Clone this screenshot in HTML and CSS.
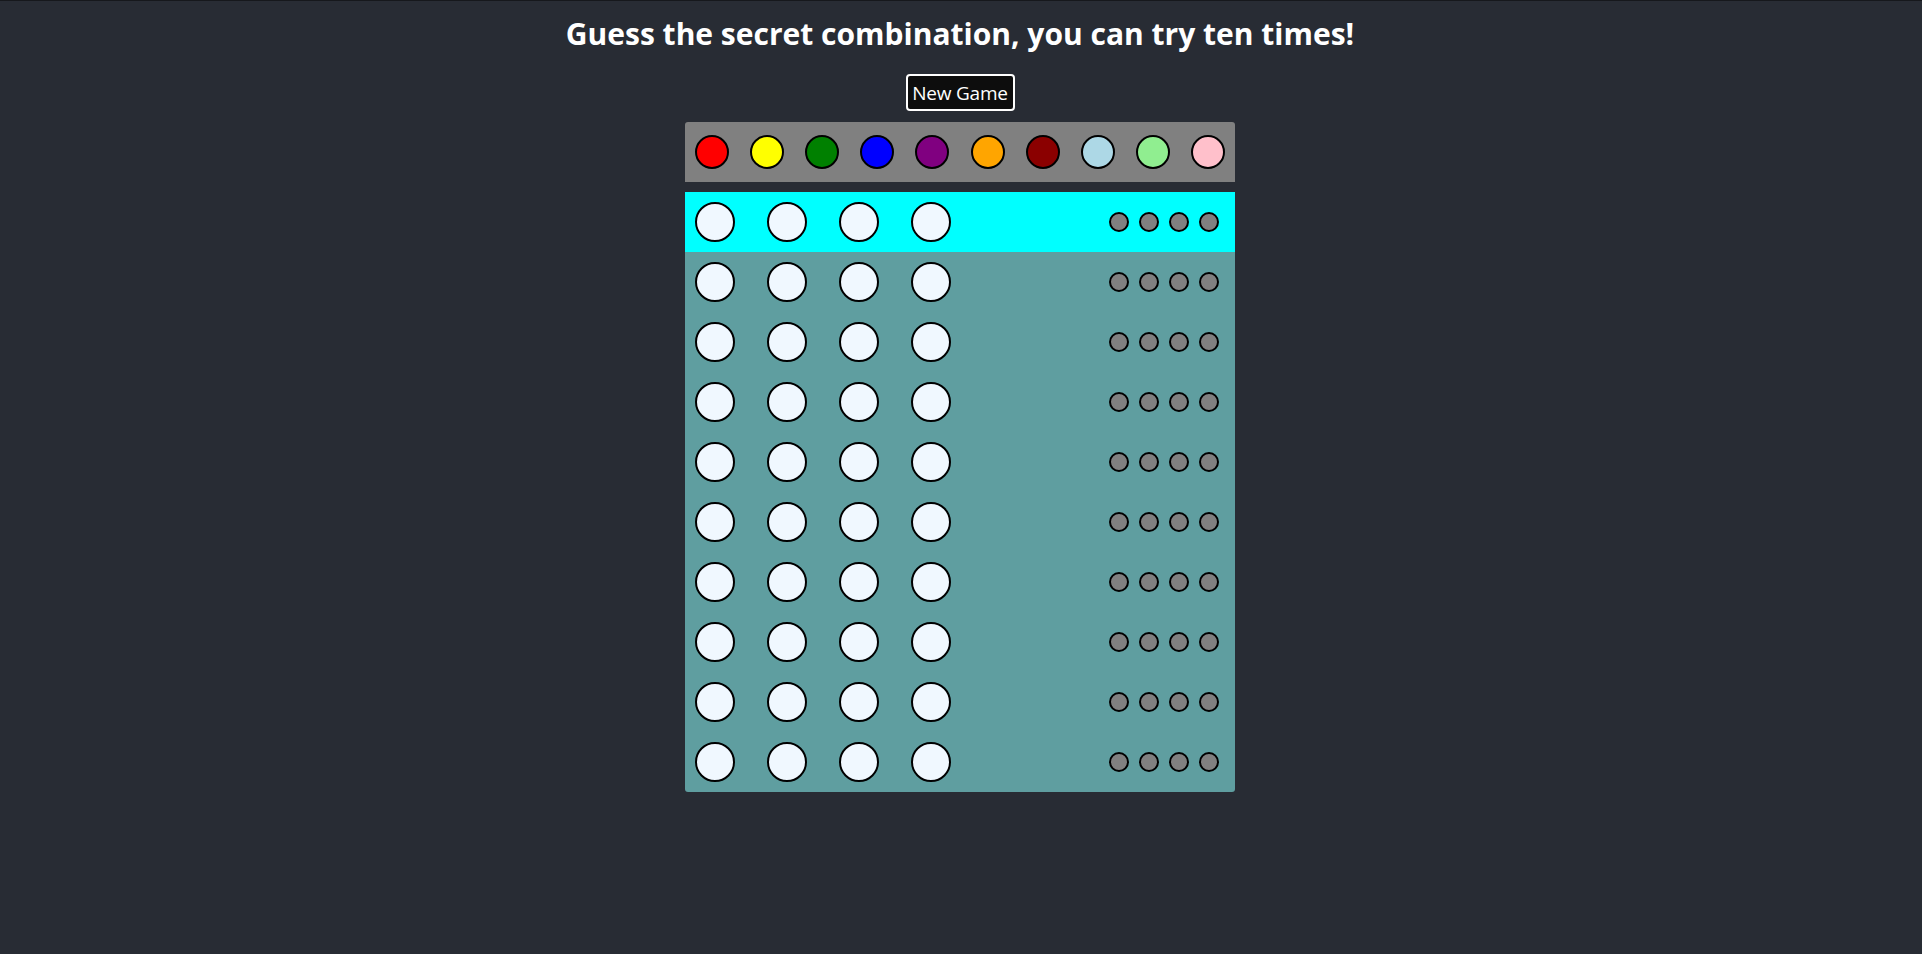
FILE: index.html
```html
<!DOCTYPE html>
<html lang="en">
<head>
<meta charset="utf-8">
<title>Mastermind</title>
<link rel="stylesheet" href="styles.css">
</head>
<body>
<div class="app">
  <h1 class="title">Guess the secret combination, you can try ten times!</h1>
  <button class="new-game">New Game</button>
  <div class="palette">
    <span class="color" style="background:#ff0000"></span>
    <span class="color" style="background:#ffff00"></span>
    <span class="color" style="background:#008000"></span>
    <span class="color" style="background:#0000ff"></span>
    <span class="color" style="background:#800080"></span>
    <span class="color" style="background:#ffa500"></span>
    <span class="color" style="background:#8b0000"></span>
    <span class="color" style="background:#add8e6"></span>
    <span class="color" style="background:#90ee90"></span>
    <span class="color" style="background:#ffc0cb"></span>
  </div>
  <div class="board">
    <div class="row active"><div class="pegs"><span class="peg"></span><span class="peg"></span><span class="peg"></span><span class="peg"></span></div><div class="hints"><span class="hint"></span><span class="hint"></span><span class="hint"></span><span class="hint"></span></div></div>
    <div class="row"><div class="pegs"><span class="peg"></span><span class="peg"></span><span class="peg"></span><span class="peg"></span></div><div class="hints"><span class="hint"></span><span class="hint"></span><span class="hint"></span><span class="hint"></span></div></div>
    <div class="row"><div class="pegs"><span class="peg"></span><span class="peg"></span><span class="peg"></span><span class="peg"></span></div><div class="hints"><span class="hint"></span><span class="hint"></span><span class="hint"></span><span class="hint"></span></div></div>
    <div class="row"><div class="pegs"><span class="peg"></span><span class="peg"></span><span class="peg"></span><span class="peg"></span></div><div class="hints"><span class="hint"></span><span class="hint"></span><span class="hint"></span><span class="hint"></span></div></div>
    <div class="row"><div class="pegs"><span class="peg"></span><span class="peg"></span><span class="peg"></span><span class="peg"></span></div><div class="hints"><span class="hint"></span><span class="hint"></span><span class="hint"></span><span class="hint"></span></div></div>
    <div class="row"><div class="pegs"><span class="peg"></span><span class="peg"></span><span class="peg"></span><span class="peg"></span></div><div class="hints"><span class="hint"></span><span class="hint"></span><span class="hint"></span><span class="hint"></span></div></div>
    <div class="row"><div class="pegs"><span class="peg"></span><span class="peg"></span><span class="peg"></span><span class="peg"></span></div><div class="hints"><span class="hint"></span><span class="hint"></span><span class="hint"></span><span class="hint"></span></div></div>
    <div class="row"><div class="pegs"><span class="peg"></span><span class="peg"></span><span class="peg"></span><span class="peg"></span></div><div class="hints"><span class="hint"></span><span class="hint"></span><span class="hint"></span><span class="hint"></span></div></div>
    <div class="row"><div class="pegs"><span class="peg"></span><span class="peg"></span><span class="peg"></span><span class="peg"></span></div><div class="hints"><span class="hint"></span><span class="hint"></span><span class="hint"></span><span class="hint"></span></div></div>
    <div class="row"><div class="pegs"><span class="peg"></span><span class="peg"></span><span class="peg"></span><span class="peg"></span></div><div class="hints"><span class="hint"></span><span class="hint"></span><span class="hint"></span><span class="hint"></span></div></div>
  </div>
</div>
</body>
</html>
```

FILE: styles.css
```css
html, body {
  margin: 0;
  padding: 0;
  height: 100%;
}
body {
  background: #282c34;
  border-top: 1px solid #16181c;
  box-sizing: border-box;
  font-family: "Open Sans", "Noto Sans", sans-serif;
  color: #ffffff;
}
.app {
  display: flex;
  flex-direction: column;
  align-items: center;
  padding-right: 2px;
}
.title {
  margin: 13px 0 0 0;
  font-size: 30px;
  line-height: 40px;
  font-weight: 700;
  letter-spacing: 0;
}
.new-game {
  margin-top: 20px;
  width: 109px;
  height: 37px;
  background: #0d0d0d;
  color: #ffffff;
  border: 2px solid #ffffff;
  border-radius: 4px;
  font-family: "Open Sans", "Noto Sans", sans-serif;
  font-size: 19px;
  letter-spacing: -0.2px;
  padding: 0;
}
.palette {
  margin-top: 11px;
  width: 550px;
  height: 60px;
  box-sizing: border-box;
  padding: 0 10px;
  background: #808080;
  border-radius: 3px 3px 0 0;
  display: flex;
  align-items: center;
  justify-content: space-between;
}
.color {
  width: 34px;
  height: 34px;
  box-sizing: border-box;
  border: 2px solid #000;
  border-radius: 50%;
}
.board {
  margin-top: 10px;
  width: 550px;
  background: #5f9ea0;
  border-radius: 0 0 3px 3px;
  overflow: hidden;
}
.row {
  height: 60px;
  display: flex;
  align-items: center;
  justify-content: space-between;
  padding: 0 16px 0 10px;
}
.row.active {
  background: #00ffff;
}
.pegs {
  display: flex;
  gap: 32px;
}
.peg {
  width: 40px;
  height: 40px;
  box-sizing: border-box;
  border: 2px solid #000;
  border-radius: 50%;
  background: #f0f8ff;
}
.hints {
  display: flex;
  gap: 10px;
}
.hint {
  width: 20px;
  height: 20px;
  box-sizing: border-box;
  border: 2px solid #000;
  border-radius: 50%;
  background: #808080;
}
```
